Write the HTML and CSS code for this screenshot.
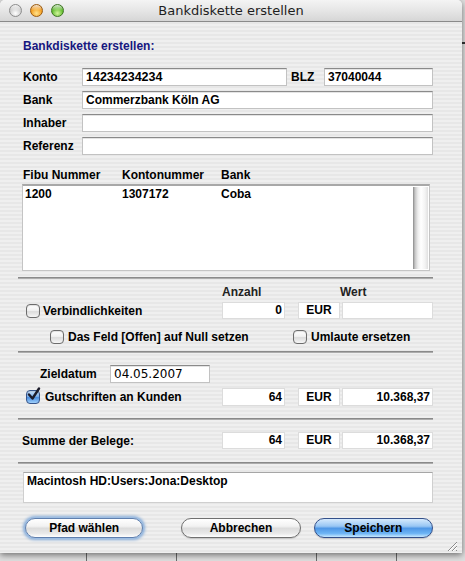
FILE: index.html
```html
<!DOCTYPE html>
<html lang="de">

<head>
    <meta charset="UTF-8">
    <title>Bankdiskette erstellen</title>
    <link rel="stylesheet" href="styles.css">
</head>

<body>
    <div class="window">
        <div class="titlebar">
            <div class="lights">
                <span class="light light-close"></span>
                <span class="light light-min"></span>
                <span class="light light-max"></span>
            </div>
            <div class="title">Bankdiskette erstellen</div>
            <div></div>
        </div>

        <div class="content">
            <h1>Bankdiskette erstellen:</h1>

            <div class="fields">
                <div class="field-row">
                    <span class="field-label">Konto</span>
                    <input class="input input-konto" type="text" value="14234234234">
                    <span class="blz-label">BLZ</span>
                    <input class="input input-blz" type="text" value="37040044">
                </div>
                <div class="field-row">
                    <span class="field-label">Bank</span>
                    <input class="input input-wide" type="text" value="Commerzbank Köln AG">
                </div>
                <div class="field-row">
                    <span class="field-label">Inhaber</span>
                    <input class="input input-wide" type="text" value="">
                </div>
                <div class="field-row">
                    <span class="field-label">Referenz</span>
                    <input class="input input-wide" type="text" value="">
                </div>
            </div>

            <div class="list-head">
                <span>Fibu Nummer</span>
                <span>Kontonummer</span>
                <span>Bank</span>
            </div>
            <div class="list">
                <div class="list-rows">
                    <div class="list-row">
                        <span>1200</span>
                        <span>1307172</span>
                        <span>Coba</span>
                    </div>
                </div>
                <div class="scrollbar"></div>
            </div>

            <div class="separator sep-1"></div>

            <div class="num-head">
                <span class="head-count">Anzahl</span>
                <span>Wert</span>
            </div>
            <div class="num-row row-verb">
                <div class="check-label">
                    <span class="check"></span>
                    <span>Verbindlichkeiten</span>
                </div>
                <div class="box box-count">0</div>
                <div class="box box-cur">EUR</div>
                <div class="box box-value"></div>
            </div>
            <div class="opt-row">
                <div class="opt opt-first">
                    <span class="check"></span>
                    <span>Das Feld [Offen] auf Null setzen</span>
                </div>
                <div class="opt">
                    <span class="check"></span>
                    <span>Umlaute ersetzen</span>
                </div>
            </div>

            <div class="separator sep-2"></div>

            <div class="date-row">
                <span class="date-label">Zieldatum</span>
                <input class="input input-date" type="text" value="04.05.2007">
            </div>
            <div class="num-row row-gut">
                <div class="check-label check-label-wide">
                    <span class="check check-on">
                        <svg width="16" height="16" viewBox="0 0 16 16">
                            <path d="M3 7.5 L6.5 11.5 L13 1.5" fill="none" stroke="#1b1b2a" stroke-width="2.4" stroke-linecap="round" stroke-linejoin="round"/>
                        </svg>
                    </span>
                    <span>Gutschriften an Kunden</span>
                </div>
                <div class="box box-count">64</div>
                <div class="box box-cur">EUR</div>
                <div class="box box-value">10.368,37</div>
            </div>

            <div class="separator sep-3"></div>

            <div class="num-row row-sum">
                <div class="sum-label">Summe der Belege:</div>
                <div class="box box-count">64</div>
                <div class="box box-cur">EUR</div>
                <div class="box box-value">10.368,37</div>
            </div>

            <div class="separator sep-4"></div>

            <div class="path-box">Macintosh HD:Users:Jona:Desktop</div>

            <div class="buttons">
                <button class="btn btn-focus btn-path">Pfad wählen</button>
                <button class="btn btn-cancel">Abbrechen</button>
                <button class="btn btn-default btn-save">Speichern</button>
            </div>
        </div>

        <svg class="grip" width="12" height="12" viewBox="0 0 12 12">
            <path d="M11 2 L2 11 M11 6 L6 11 M11 10 L10 11" stroke="#8a8a8a" stroke-width="1"/>
            <path d="M11 3 L3 11 M11 7 L7 11" stroke="#ffffff" stroke-width="1"/>
        </svg>
    </div>
</body>

</html>
```

FILE: styles.css
```css
* {
    box-sizing: border-box;
}

html,
body {
    height: 100%;
}

body {
    margin: 0;
    font-family: "Liberation Sans", Arial, sans-serif;
    font-size: 12px;
    font-weight: bold;
    color: #000;
    background-color: #dedede;
    background-image:
        linear-gradient(to right, transparent 86px, #6a6a6a 86px, #6a6a6a 87px, transparent 87px),
        linear-gradient(to right, transparent 176px, #6a6a6a 176px, #6a6a6a 177px, transparent 177px),
        linear-gradient(to right, transparent 316px, #6a6a6a 316px, #6a6a6a 317px, transparent 317px),
        linear-gradient(to right, transparent 396px, #6a6a6a 396px, #6a6a6a 397px, transparent 397px),
        linear-gradient(to bottom, transparent 42px, #333 42px, #333 44px, transparent 44px);
}

.window {
    position: relative;
    width: 462px;
    height: 553px;
    border-radius: 5px 5px 0 0;
    overflow: hidden;
    background: repeating-linear-gradient(to bottom, #efefef 0, #efefef 2px, #e7e7e7 2px, #e7e7e7 4px);
    box-shadow: 0 2px 6px rgba(0, 0, 0, 0.5);
}

/* title bar */

.titlebar {
    height: 22px;
    display: grid;
    grid-template-columns: 1fr auto 1fr;
    align-items: center;
    background: linear-gradient(to bottom, #f4f4f4, #e6e6e6 50%, #d6d6d6);
    border-bottom: 1px solid #8a8a8a;
}

.lights {
    display: flex;
    gap: 8px;
    padding-left: 9px;
}

.light {
    width: 13px;
    height: 13px;
    border-radius: 50%;
}

.light-close {
    border: 1px solid #8c8c8c;
    background:
        linear-gradient(to bottom, rgba(255, 255, 255, 0.85), rgba(255, 255, 255, 0) 50%),
        radial-gradient(circle at 50% 75%, #ffffff, #cfcfcf 55%, #a5a5a5);
}

.light-min {
    border: 1px solid #9a5a10;
    background:
        linear-gradient(to bottom, rgba(255, 255, 255, 0.8), rgba(255, 255, 255, 0) 50%),
        radial-gradient(circle at 50% 75%, #ffe38c, #f3a024 55%, #b15e04);
}

.light-max {
    border: 1px solid #3d7422;
    background:
        linear-gradient(to bottom, rgba(255, 255, 255, 0.8), rgba(255, 255, 255, 0) 50%),
        radial-gradient(circle at 50% 75%, #d2f59a, #64bd33 55%, #2f7a12);
}

.title {
    font-family: "DejaVu Sans", sans-serif;
    font-weight: normal;
    font-size: 13px;
    color: #1e1e1e;
}

/* content */

.content {
    padding: 17px 29px 0 23px;
}

h1 {
    margin: 0;
    font-size: 12px;
    line-height: 14px;
    color: #17177f;
}

.input {
    height: 18px;
    margin: 0;
    padding: 0 3px;
    font-family: "Liberation Sans", Arial, sans-serif;
    font-size: 12px;
    font-weight: bold;
    color: #000;
    background: #fff;
    border: 1px solid #c2c2c2;
    border-top-color: #8a8a8a;
    box-shadow: inset 0 1px 0 #e4e4e4;
    outline: none;
}

.fields {
    margin-top: 15px;
    display: flex;
    flex-direction: column;
    gap: 5px;
}

.field-row {
    display: flex;
    align-items: center;
    height: 18px;
}

.field-label {
    width: 59px;
}

.input-konto {
    width: 205px;
    font-size: 12.5px;
}

.blz-label {
    width: 37px;
    padding-left: 4px;
}

.input-blz {
    width: 109px;
}

.input-wide {
    width: 351px;
}

/* list */

.list-head {
    margin-top: 13px;
    display: grid;
    grid-template-columns: 99px 99px auto;
    line-height: 14px;
}

.list {
    margin-top: 2px;
    margin-left: -1px;
    width: 408px;
    height: 87px;
    display: flex;
    background: #fff;
    border: 1px solid #c4c4c4;
    border-top: 2px solid #a8a8a8;
}

.list-rows {
    flex: 1;
    padding: 1px 2px;
}

.list-row {
    display: grid;
    grid-template-columns: 97px 99px auto;
    line-height: 14px;
}

.scrollbar {
    width: 15px;
    margin: 1px 1px 1px 0;
    background: linear-gradient(to right, #8a8a8a 0, #c6c6c6 2px, #eeeeee 5px, #ffffff 8px, #f3f3f3 12px, #e0e0e0 15px);
}

.separator {
    margin-left: -5px;
    height: 2px;
    border-top: 1px solid #8a8a8a;
    border-bottom: 1px solid #acacac;
}

.sep-1 {
    margin-top: 6px;
}

.sep-2 {
    margin-top: 6px;
}

.sep-3 {
    margin-top: 12px;
}

.sep-4 {
    margin-top: 13px;
}

/* amounts */

.num-head {
    margin-top: 6px;
    display: flex;
    line-height: 14px;
    padding-left: 199px;
    color: #222;
}

.head-count {
    width: 118px;
}

.num-row {
    display: flex;
    align-items: center;
    height: 17px;
}

.row-verb {
    margin-top: 3px;
}

.row-gut {
    margin-top: 5px;
    height: 18px;
}

.row-sum {
    margin-top: 12px;
}

.check-label {
    flex: 1;
    display: flex;
    align-items: center;
    gap: 3px;
    padding-left: 3px;
}

.check-label-wide {
    gap: 5px;
}

.sum-label {
    flex: 1;
    margin-left: -1px;
}

.box {
    height: 100%;
    background: #fff;
    border: 1px solid #dcdcdc;
    line-height: 15px;
    padding: 0 2px;
}

.box-count {
    width: 63px;
    text-align: right;
}

.box-cur {
    width: 42px;
    margin-left: 13px;
    text-align: center;
}

.box-value {
    width: 91px;
    margin-left: 2px;
    text-align: right;
}

.row-gut .box {
    line-height: 16px;
}

.check {
    flex: none;
    position: relative;
    width: 14px;
    height: 14px;
    border: 1px solid #6c6c6c;
    border-radius: 4px;
    background: linear-gradient(to bottom, #ffffff, #f1f1f1 45%, #dcdcdc 55%, #f6f6f6);
    box-shadow: inset 0 1px 1px rgba(0, 0, 0, 0.12);
}

.check-on {
    border-color: #36548a;
    background: linear-gradient(to bottom, #cfe4fa, #7fb2ec 45%, #4b8ee0 55%, #9fd0fb);
}

.check-on svg {
    position: absolute;
    left: -1px;
    top: -4px;
}

.opt-row {
    margin-top: 9px;
    height: 17px;
    display: flex;
    align-items: center;
    padding-left: 27px;
}

.opt {
    display: flex;
    align-items: center;
    gap: 4px;
}

.opt-first {
    width: 243px;
}

/* date */

.date-row {
    margin-top: 12px;
    display: flex;
    align-items: center;
    height: 18px;
}

.date-label {
    width: 87px;
    padding-left: 17px;
}

.input-date {
    width: 100px;
    font-family: "DejaVu Sans", sans-serif;
    font-weight: normal;
    font-size: 12px;
}

/* path and buttons */

.path-box {
    margin-top: 8px;
    height: 31px;
    padding: 1px 3px;
    line-height: 14px;
    background: #fff;
    border: 1px solid #cfcfcf;
    border-top-color: #a6a6a6;
}

.buttons {
    margin-top: 15px;
    display: flex;
    height: 20px;
}

.btn {
    height: 20px;
    width: 120px;
    padding: 0;
    border-radius: 10px;
    border: 1px solid #707070;
    font-family: "Liberation Sans", Arial, sans-serif;
    font-size: 12px;
    font-weight: bold;
    color: #000;
    line-height: 18px;
    text-align: center;
    background: linear-gradient(to bottom, #ffffff, #f2f2f2 40%, #dcdcdc 52%, #e9e9e9 80%, #ffffff);
    box-shadow: 0 1px 1px rgba(0, 0, 0, 0.15);
}

.btn-path {
    width: 119px;
    margin-left: 2px;
}

.btn-focus {
    border-color: #5f7fae;
    box-shadow: 0 0 0 1px #9dbde2, 0 0 3px 2px #86acd9;
}

.btn-cancel {
    margin-left: 38px;
}

.btn-save {
    margin-left: 13px;
}

.btn-default {
    border-color: #34508a;
    background: linear-gradient(to bottom, #d6eafd, #98c6f4 40%, #4f97e6 52%, #6db4f4 80%, #c7e8ff);
}

.grip {
    position: absolute;
    right: 4px;
    bottom: 1px;
}
```
